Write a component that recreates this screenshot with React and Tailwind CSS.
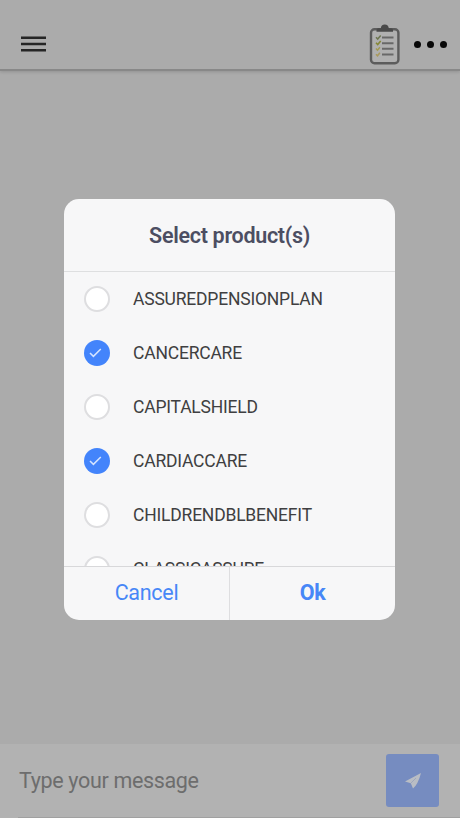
const products = [
  { name: "ASSUREDPENSIONPLAN", checked: false },
  { name: "CANCERCARE", checked: true },
  { name: "CAPITALSHIELD", checked: false },
  { name: "CARDIACCARE", checked: true },
  { name: "CHILDRENDBLBENEFIT", checked: false },
  { name: "CLASSICASSURE", checked: false },
];

function MenuIcon() {
  return (
    <svg width="25" height="18" viewBox="0 0 25 18" fill="none">
      <path d="M0 2.7H25M0 9H25M0 15.3H25" stroke="#252525" strokeWidth="2.5" />
    </svg>
  );
}

function Clipboard() {
  return (
    <svg width="32" height="42" viewBox="0 0 32 42" fill="none">
      <rect x="2" y="6.2" width="27.4" height="34" rx="3.5" fill="#b0b0b0" stroke="#5c5c5c" strokeWidth="2.4" />
      <path d="M7.5 8.7V7Q7.5 5.2 9.5 5.2H11.8Q12 1.4 15.8 1.4Q19.5 1.4 19.8 5.2H22Q24 5.2 24 7V8.7Z" fill="#4a4a4a" />
      <path d="M13 14.6H24.5M13 20.2H24.5M13 25.8H24.5M13 31.5H24.5" stroke="#686868" strokeWidth="2" />
      <path d="M7 14.2l1.7 1.8 3-3.6" stroke="#6d7650" strokeWidth="1.5" />
      <path d="M7 19.8l1.7 1.8 3-3.6" stroke="#858735" strokeWidth="1.5" />
      <path d="M7 25.6l1.5 1.6 2.4-3" stroke="#a39b52" strokeWidth="1.5" />
      <path d="M7 31.2l1.5 1.6 2.4-3" stroke="#a9995c" strokeWidth="1.5" />
    </svg>
  );
}

function Radio({ checked }) {
  if (!checked) {
    return <span className="size-[26px] shrink-0 rounded-full border-2 border-[#dedee0] bg-white" />;
  }
  return (
    <span className="flex size-[26px] shrink-0 items-center justify-center rounded-full bg-[#4384fb]">
      <svg width="26" height="26" viewBox="0 0 26 26" fill="none">
        <path d="M6 13l3.4 3.4 7.4-7.4" stroke="#d5e4ff" strokeWidth="1.5" />
      </svg>
    </span>
  );
}

export default function App() {
  return (
    <div className="relative flex h-[818px] w-[460px] flex-col overflow-hidden bg-[#ababab] font-['Roboto',sans-serif]">
      <header className="flex h-[71px] shrink-0 items-center border-b-2 border-[#888888] pt-[19px] pr-[13px] pl-[21px] shadow-[0_1px_3px_rgba(0,0,0,0.15)]">
        <MenuIcon />
        <div className="ml-auto flex items-center gap-[13px]">
          <Clipboard />
          <div className="flex gap-[6px]">
            <span className="size-[7px] rounded-full bg-[#080808]" />
            <span className="size-[7px] rounded-full bg-[#080808]" />
            <span className="size-[7px] rounded-full bg-[#080808]" />
          </div>
        </div>
      </header>
      <main className="flex-1" />
      <footer className="flex h-[74px] shrink-0 flex-col bg-[#b2b2b2] pl-[18px]">
        <div className="flex flex-1 items-center justify-between pr-[21px]">
          <span className="pt-[2px] pl-px text-[21.5px] tracking-[-0.34px] text-[#6d6d6d]">Type your message</span>
          <span className="flex size-[53px] items-center justify-center rounded-[3px] bg-[#768cc0]">
            <svg width="18" height="18" viewBox="0 0 18 18">
              <path d="M17 1L1 9.6l5.8 1.6 2.2 5.3q5-4 8-15.5Z" fill="#b9bdc4" />
              <path d="M6.8 11.2L12 6" stroke="#949eb9" strokeWidth="0.7" />
            </svg>
          </span>
        </div>
        <div className="h-px bg-[#a0a0a0]" />
      </footer>

      <section className="absolute top-[199px] left-[64px] flex h-[421px] w-[331px] flex-col overflow-hidden rounded-[15px] bg-[#f7f7f8]">
        <h2 className="flex h-[73px] shrink-0 items-center justify-center border-b-[1.5px] border-[#dedfe0] pt-[2px] text-[21.5px] font-semibold tracking-[-0.3px] text-[#4c4e62]">
          Select product(s)
        </h2>
        <ul className="min-h-0 flex-1 overflow-hidden">
          {products.map((p) => (
            <li key={p.name} className="flex h-[54px] items-center gap-[23px] pl-[20px]">
              <Radio checked={p.checked} />
              <span className="text-[17.5px] tracking-[-0.2px] text-[#3f3f41]">{p.name}</span>
            </li>
          ))}
        </ul>
        <div className="flex h-[54px] shrink-0 border-t border-[#d8d8da] text-[21.5px] tracking-[-0.3px] text-[#4787f7]">
          <button className="w-[166px] border-r border-[#dedee0]">Cancel</button>
          <button className="flex-1 font-bold">Ok</button>
        </div>
      </section>
    </div>
  );
}
